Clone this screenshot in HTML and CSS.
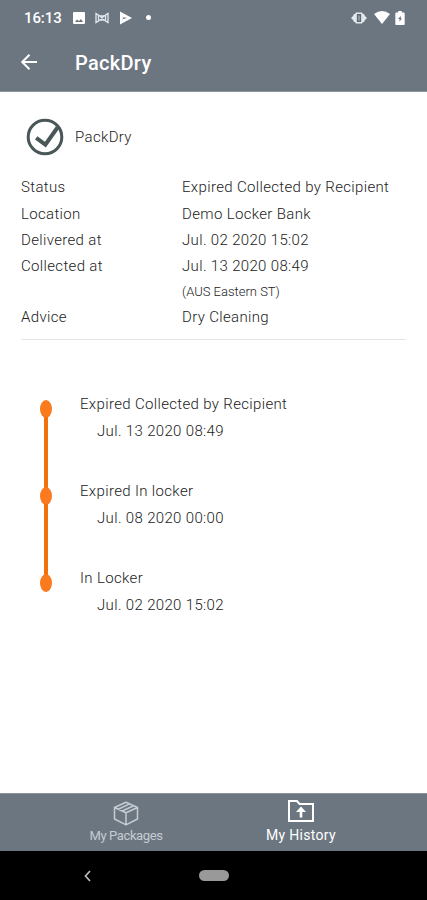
FILE: index.html
```html
<!DOCTYPE html>
<html lang="en">
<head>
    <meta charset="UTF-8">
    <meta name="viewport" content="width=device-width, initial-scale=1.0">
    <title>PackDry</title>
    <link rel="stylesheet" href="styles.css">
</head>
<body>
    <div class="screen">
        <div class="status-bar">
            <span class="clock">16:13</span>
            <svg class="status-image" width="12" height="12" viewBox="0 0 12 12">
                <path fill="#fff" fill-rule="evenodd" d="M1 0h10a1 1 0 0 1 1 1v10a1 1 0 0 1-1 1H1a1 1 0 0 1-1-1V1a1 1 0 0 1 1-1zM2 10h8L8 7 6 9 4 7.500z"/>
            </svg>
            <svg class="status-bow" width="14" height="12" viewBox="0 0 14 12" fill="none" stroke="#e3e8ee" stroke-width="1.300">
                <path d="M1 1.500L5 4h4l4-2.500v9L9 8H5l-4 2.500zM3.500 3v6M10.500 3v6M5 4l4 4M9 4L5 8"/>
            </svg>
            <svg class="status-play" width="12" height="14" viewBox="0 0 12 14">
                <path fill="#fff" fill-rule="evenodd" d="M0 .5L12 7 0 13.500zM1.800 4.500L3 6.300 7.500 7 3 7.900 1.800 9.500 3.200 7z"/>
            </svg>
            <span class="status-dot"></span>
            <svg class="status-vibrate" width="16" height="12" viewBox="0 0 16 12">
                <path fill="#e3e8ee" d="M5 .5h6l1 1.500h1l1 2 2 2-2 2-1 2h-1l-1 1.500H5L4 10H3L2 8 0 6l2-2 1-2h1z"/>
                <path fill="#a9b1ba" stroke="#5f6974" stroke-width="1.500" d="M6.600 2.700h2.800v6.600H6.600z"/>
            </svg>
            <svg class="status-wifi" width="16" height="13" viewBox="0 0 16 13">
                <path fill="#fff" d="M0 3Q8-3 16 3L8 13z"/>
            </svg>
            <svg class="status-battery" width="10" height="14" viewBox="0 0 10 15">
                <path fill="#fff" d="M3 0h4v1.500h2a1 1 0 0 1 1 1V14a1 1 0 0 1-1 1H1a1 1 0 0 1-1-1V2.500a1 1 0 0 1 1-1h2z"/>
                <path fill="#6c7681" d="M5.800 5v2.700h1.200L4.500 11.500V8.700H3z"/>
            </svg>
        </div>

        <header class="app-bar">
            <svg class="back" width="18" height="18" viewBox="0 0 18 18" fill="none" stroke="#fff" stroke-width="2">
                <path d="M17 9H2M9.500 1.700L2.200 9l7.300 7.300"/>
            </svg>
            <h1>PackDry</h1>
        </header>

        <main class="content">
            <div class="package">
                <svg width="38" height="38" viewBox="0 0 38 38" fill="none" stroke="#4a5759">
                    <circle cx="19" cy="19" r="16.800" stroke-width="3"/>
                    <path d="M10.200 19.800L19.400 26.600 31.500 9.500" stroke-width="4"/>
                </svg>
                <span>PackDry</span>
            </div>

            <dl class="details">
                <dt>Status</dt><dd>Expired Collected by Recipient</dd>
                <dt>Location</dt><dd>Demo Locker Bank</dd>
                <dt>Delivered at</dt><dd>Jul. 02 2020 15:02</dd>
                <dt>Collected at</dt><dd>Jul. 13 2020 08:49</dd>
                <dd class="timezone">(AUS Eastern ST)</dd>
                <dt>Advice</dt><dd>Dry Cleaning</dd>
            </dl>

            <ol class="timeline">
                <li class="event">
                    <div class="marker"></div>
                    <div>
                        <p>Expired Collected by Recipient</p>
                        <p class="event-date">Jul. 13 2020 08:49</p>
                    </div>
                </li>
                <li class="event">
                    <div class="marker"></div>
                    <div>
                        <p>Expired In locker</p>
                        <p class="event-date">Jul. 08 2020 00:00</p>
                    </div>
                </li>
                <li class="event">
                    <div class="marker"></div>
                    <div>
                        <p>In Locker</p>
                        <p class="event-date">Jul. 02 2020 15:02</p>
                    </div>
                </li>
            </ol>
        </main>

        <nav class="tabs">
            <a class="tab">
                <svg width="26" height="25" viewBox="0 0 26 25" fill="none" stroke="#c5cbd2" stroke-width="1.500" stroke-linejoin="round">
                    <path d="M13 1.200L24.500 6.500V18L13 23.800 1.500 18V6.500zM1.500 6.500L13 11.800 24.500 6.500M13 11.800v12M5.200 8.200L16.700 2.900M9.200 10L20.700 4.700"/>
                </svg>
                <span>My Packages</span>
            </a>
            <a class="tab active">
                <svg width="26" height="22" viewBox="0 0 26 22">
                    <path fill="none" stroke="#fff" stroke-width="2" d="M1 1h8l2.500 3H25v17H1z"/>
                    <path fill="#fff" d="M13 6.500l5 5.500h-3.700v5.500h-2.600V12H8z"/>
                </svg>
                <span>My History</span>
            </a>
        </nav>

        <div class="system-bar">
            <svg width="7" height="12" viewBox="0 0 7 12" fill="none" stroke="#bbb" stroke-width="1.700">
                <path d="M6 1L1.500 6 6 11"/>
            </svg>
            <span class="home-pill"></span>
        </div>
    </div>
</body>
</html>
```

FILE: styles.css
```css
* {
    box-sizing: border-box;
}

body {
    margin: 0;
    font-family: Roboto, "Liberation Sans", sans-serif;
    font-size: 15px;
    font-weight: 300;
    letter-spacing: 0.34px;
    color: #222;
    background: #fff;
}

p, h1, dl, dd, ol {
    margin: 0;
    padding: 0;
}

.screen {
    display: flex;
    flex-direction: column;
    height: 900px;
}

.status-bar {
    display: flex;
    align-items: center;
    height: 35px;
    padding: 0 22px 0 24px;
    background: #6c7681;
}

.clock {
    width: 49px;
    font-size: 15px;
    font-weight: 500;
    letter-spacing: -0.1px;
    color: #fff;
}

.status-bow {
    margin-left: 10px;
}

.status-play {
    margin-left: 11px;
}

.status-dot {
    width: 5px;
    height: 5px;
    margin-left: 14px;
    border-radius: 50%;
    background: #fff;
}

.status-vibrate {
    margin-left: auto;
}

.status-wifi {
    margin-left: 7px;
}

.status-battery {
    margin-left: 5px;
}

.app-bar {
    display: flex;
    align-items: center;
    height: 57px;
    padding: 0 20px 2px;
    border-bottom: 1px solid #8c949d;
    background: #6c7681;
}

.app-bar h1 {
    margin: 2px 0 0 37px;
    font-size: 20px;
    font-weight: 500;
    letter-spacing: 0.3px;
    color: #fff;
}

.content {
    flex: 1;
    padding: 26px 21px 0;
}

.package {
    display: flex;
    align-items: center;
    gap: 11px;
    height: 38px;
    padding-left: 5px;
}

.package span {
    margin-bottom: 1px;
}

.details {
    display: grid;
    grid-template-columns: 161px 1fr;
    grid-template-rows: 27px 27px 26px 26px 25px 26px;
    align-items: center;
    height: 167px;
    margin-top: 17px;
    border-bottom: 1px solid #e4e4e4;
}

.timezone {
    grid-column: 2;
    font-size: 13px;
    letter-spacing: 0;
}

.timeline {
    margin-top: 51px;
    list-style: none;
}

.event {
    display: grid;
    grid-template-columns: 59px 1fr;
    height: 87px;
    line-height: 27px;
}

.event-date {
    padding-left: 17px;
}

.marker {
    display: flex;
    flex-direction: column;
    align-items: center;
    width: 12px;
    margin: 9px 0 -9px 19px;
}

.marker::before {
    content: "";
    width: 12px;
    height: 18px;
    border-radius: 50%;
    background: #f97a1f;
}

.marker::after {
    content: "";
    flex: 1;
    width: 4px;
    margin: -1px 0;
    background: #f3700f;
}

.event:last-child .marker::after {
    display: none;
}

.tabs {
    display: flex;
    justify-content: center;
    height: 58px;
    border-top: 1px solid #8c949d;
    background: #6c7681;
}

.tab {
    display: flex;
    flex-direction: column;
    align-items: center;
    width: 175px;
    padding-top: 7px;
    font-size: 13px;
    font-weight: 400;
    letter-spacing: -0.4px;
    color: #c5cbd2;
}

.tab span {
    margin-top: 2px;
}

.tab.active {
    padding-top: 6px;
    font-size: 14px;
    letter-spacing: 0.3px;
    color: #fff;
}

.tab.active span {
    margin-top: 5px;
}

.system-bar {
    display: flex;
    align-items: center;
    height: 49px;
    padding-left: 84px;
    background: #000;
}

.home-pill {
    width: 30px;
    height: 11px;
    margin-left: 108px;
    border-radius: 6px;
    background: #999;
}
```
